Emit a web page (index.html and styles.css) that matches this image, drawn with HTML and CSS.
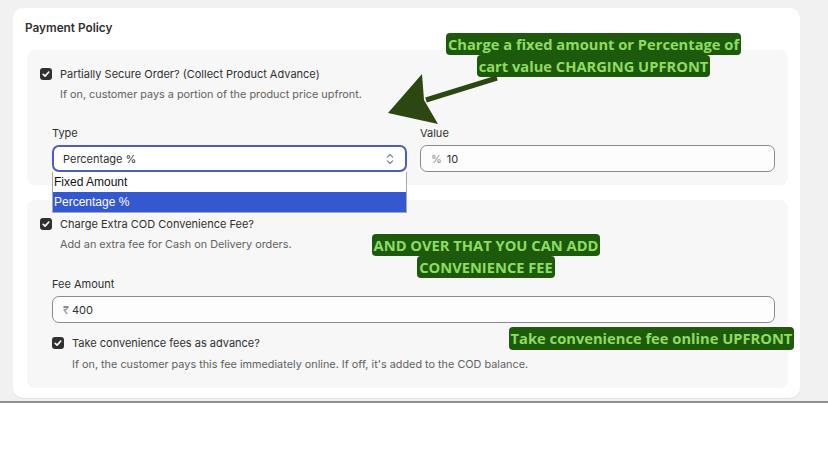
FILE: index.html
```html
<!DOCTYPE html>
<html>
<head>
<meta charset="utf-8">
<link rel="stylesheet" href="styles.css">
</head>
<body>
<div class="screen">
  <div class="card">
    <h2 class="title">Payment Policy</h2>

    <div class="section s1">
      <div class="check-row">
        <span class="cb"><svg viewBox="0 0 12 12"><path d="M3.2 6.3 L5.1 8.1 L8.8 4" fill="none" stroke="#fff" stroke-width="1.6" stroke-linecap="round" stroke-linejoin="round"/></svg></span>
        <span class="label">Partially Secure Order? (Collect Product Advance)</span>
      </div>
      <p class="help">If on, customer pays a portion of the product price upfront.</p>

      <div class="fields">
        <div class="field">
          <div class="flabel">Type</div>
          <div class="select-wrap">
            <div class="select">
              <span>Percentage %</span>
              <svg class="chev" viewBox="0 0 10 14"><path d="M2.5 5 L5 2.5 L7.5 5 M2.5 9 L5 11.5 L7.5 9" fill="none" stroke="#8a8a8a" stroke-width="1.3" stroke-linecap="round" stroke-linejoin="round"/></svg>
            </div>
            <ul class="options">
              <li>Fixed Amount</li>
              <li class="sel">Percentage %</li>
            </ul>
          </div>
        </div>
        <div class="field">
          <div class="flabel">Value</div>
          <div class="input"><span class="pre">%</span><span>10</span></div>
        </div>
      </div>
    </div>

    <div class="section s2">
      <div class="check-row">
        <span class="cb"><svg viewBox="0 0 12 12"><path d="M3.2 6.3 L5.1 8.1 L8.8 4" fill="none" stroke="#fff" stroke-width="1.6" stroke-linecap="round" stroke-linejoin="round"/></svg></span>
        <span class="label">Charge Extra COD Convenience Fee?</span>
      </div>
      <p class="help">Add an extra fee for Cash on Delivery orders.</p>

      <div class="inner">
        <div class="flabel">Fee Amount</div>
        <div class="input rupee"><span class="pre">₹</span><span>400</span></div>

        <div class="check-row sub">
          <span class="cb"><svg viewBox="0 0 12 12"><path d="M3.2 6.3 L5.1 8.1 L8.8 4" fill="none" stroke="#fff" stroke-width="1.6" stroke-linecap="round" stroke-linejoin="round"/></svg></span>
          <span class="label">Take convenience fees as advance?</span>
        </div>
        <p class="help sub-help">If on, the customer pays this fee immediately online. If off, it's added to the COD balance.</p>
      </div>
    </div>
  </div>

  <div class="note n1"><span>Charge a fixed amount or Percentage of</span><span>cart value CHARGING UPFRONT</span></div>
  <div class="note n2"><span>AND OVER THAT YOU CAN ADD</span><span>CONVENIENCE FEE</span></div>
  <div class="note n3"><span>Take convenience fee online UPFRONT</span></div>

  <svg class="arrow" viewBox="0 0 828 466" width="828" height="466">
    <line x1="426" y1="100" x2="497" y2="78" stroke="#2d4712" stroke-width="5"/>
    <polygon points="388,113 422,74 424,100 438,124" fill="#2d4712"/>
  </svg>
</div>
</body>
</html>
```

FILE: styles.css
```css
* { box-sizing: border-box; }
html, body { margin: 0; padding: 0; background: #fff; }
body {
  font-family: Inter, "Noto Sans", sans-serif;
  color: #303030;
  width: 828px;
  height: 466px;
  overflow: hidden;
}
.screen {
  position: relative;
  height: 403px;
  background: #f1f1f1;
  border-bottom: 2px solid #8f8f8f;
  padding: 8px 28px 0 13px;
}
.card {
  background: #fff;
  border-radius: 10px;
  height: 390px;
  padding: 12px 12px 0 12px;
  box-shadow: 0 1px 0 rgba(0,0,0,0.06);
}
.title {
  margin: 0 0 14px 0;
  font-size: 11.8px;
  font-weight: 600;
  line-height: 16px;
}
.section {
  background: #f7f7f7;
  border-radius: 8px;
  padding: 17px 13px 0 13px;
  margin-left: 2px;
}
.s1 { height: 135px; }
.s2 { height: 188px; margin-top: 15px; padding-top: 17px; }
.check-row {
  display: flex;
  align-items: center;
  gap: 8px;
  height: 14px;
}
.cb {
  width: 12px;
  height: 12px;
  border-radius: 3px;
  background: #303030;
  display: inline-flex;
}
.cb svg { width: 12px; height: 12px; }
.label { font-size: 11px; line-height: 14px; color: #303030; }
.help {
  margin: 6px 0 0 20px;
  font-size: 10.85px;
  line-height: 14px;
  color: #616161;
}
.fields {
  display: grid;
  grid-template-columns: 1fr 1fr;
  gap: 13px;
  margin: 25px 0 0 12px;
}
.flabel {
  font-size: 11px;
  line-height: 14px;
  color: #303030;
  margin-bottom: 5px;
}
.select-wrap { position: relative; }
.select {
  height: 27px;
  border: 2px solid #4f5bc4;
  border-radius: 7px;
  background: #fff;
  display: flex;
  align-items: center;
  justify-content: space-between;
  padding: 0 10px 0 9px;
  font-size: 11px;
}
.chev { width: 10px; height: 14px; }
.options {
  position: absolute;
  left: 0;
  right: 0;
  top: 27px;
  margin: 0;
  padding: 0;
  list-style: none;
  background: #fff;
  border: 1px solid #a8a8a8;
  border-top: none;
  font-family: "Liberation Sans", Arial, sans-serif;
  font-size: 12px;
  color: #111;
  z-index: 2;
}
.options li { height: 20px; line-height: 20px; padding-left: 1px; }
.options li.sel { background: #3458cf; color: #fff; }
.input {
  height: 27px;
  border: 1px solid #8a8a8a;
  border-radius: 7px;
  background: #fdfdfd;
  display: flex;
  align-items: center;
  gap: 5px;
  padding: 0 10px;
  font-size: 11px;
  color: #303030;
}
.input.rupee { gap: 3px; }
.pre { color: #8a8a8a; }
.inner { margin: 26px 0 0 12px; }
.check-row.sub { margin-top: 13px; }
.sub-help { margin-top: 7px; }

.note {
  position: absolute;
  display: flex;
  flex-direction: column;
  align-items: center;
  font-family: "Open Sans", sans-serif;
  font-weight: 700;
  font-size: 14.7px;
  color: #8fdc62;
  line-height: 22px;
  z-index: 3;
}
.note span {
  background: #1d5a0c;
  border-radius: 4px;
  padding: 0 2px;
  white-space: nowrap;
}
.n1 { left: 447px; top: 33px; width: 293px; }
.n2 { left: 369px; top: 234px; width: 234px; }
.n3 { left: 508px; top: 327px; width: 287px; line-height: 23px; }
.arrow { position: absolute; left: 0; top: 0; pointer-events: none; z-index: 4; }
```
